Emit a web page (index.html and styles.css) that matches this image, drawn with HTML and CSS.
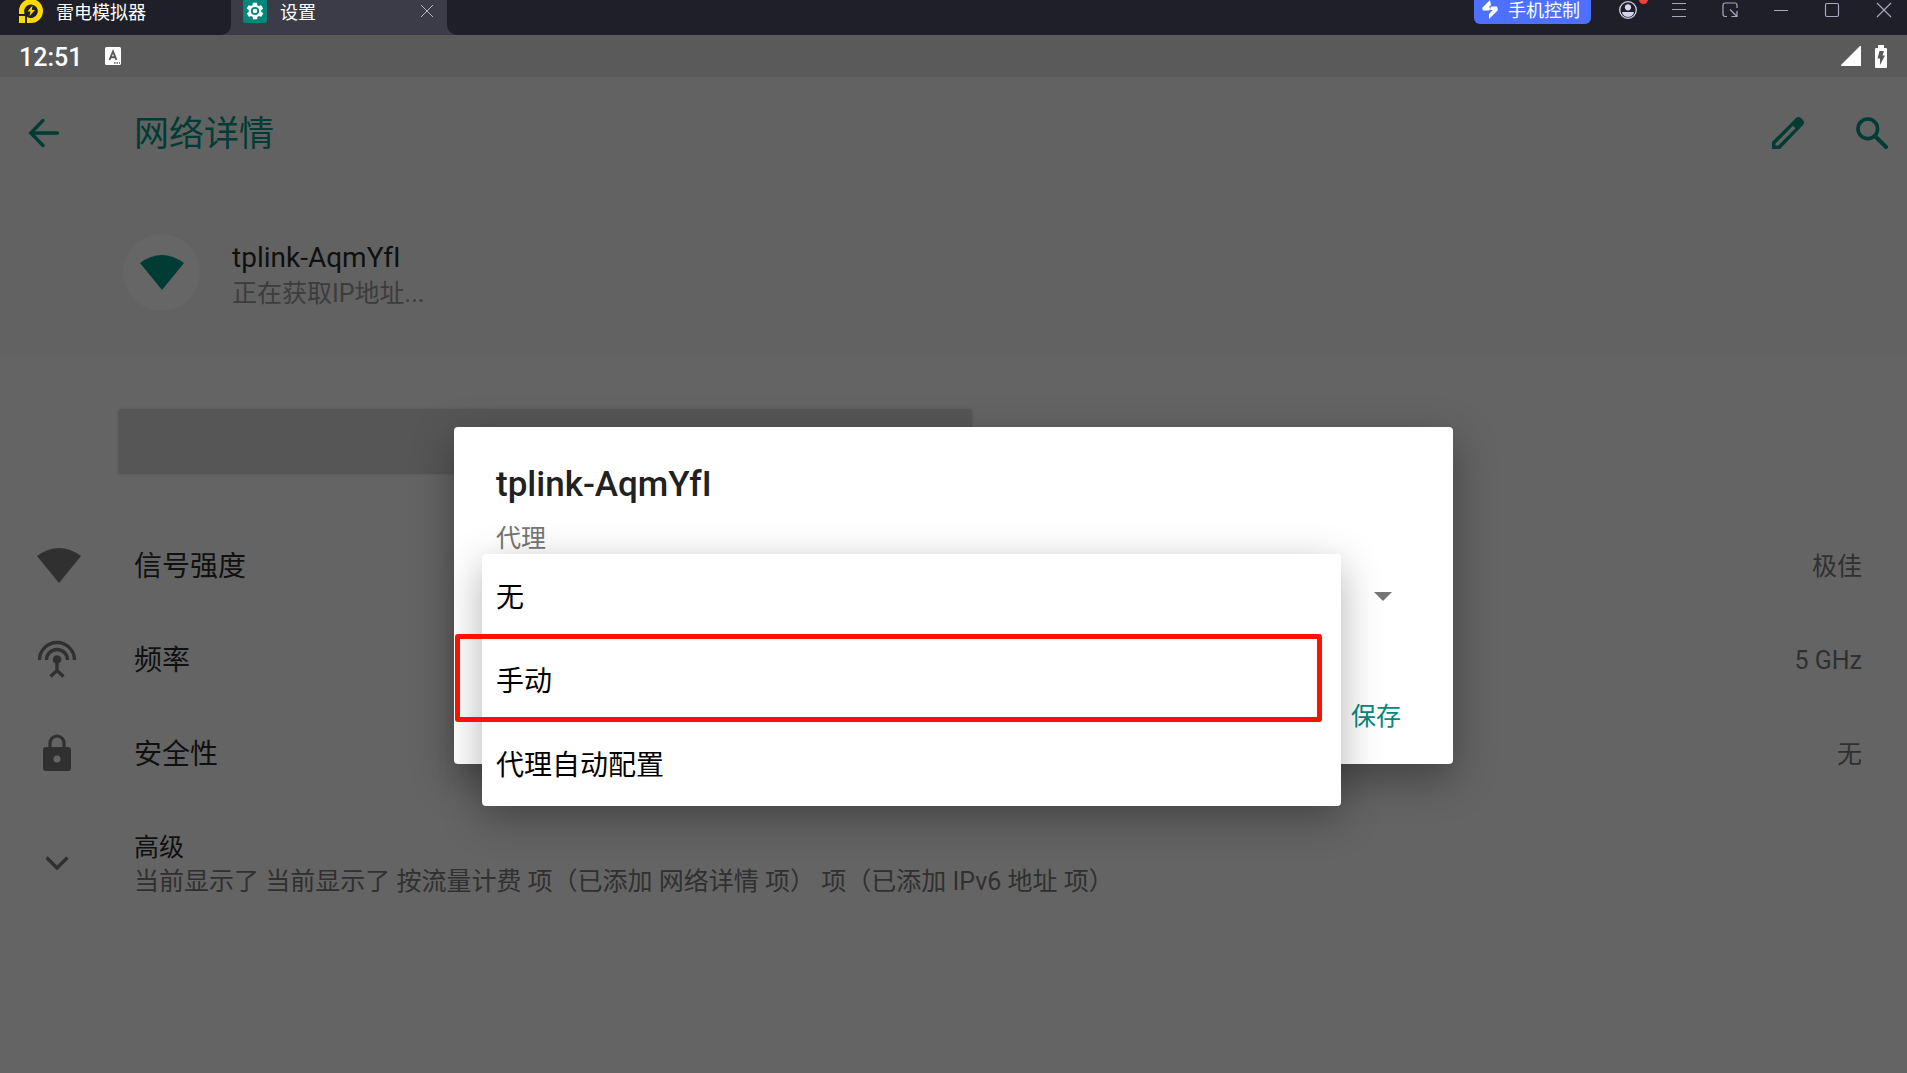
FILE: index.html
```html
<!DOCTYPE html>
<html lang="zh-CN">
<head>
  <meta charset="UTF-8">
  <meta name="viewport" content="width=device-width, initial-scale=1.0">
  <title>网络详情</title>
  <link rel="stylesheet" href="styles.css">
</head>
<body>
<header class="titlebar">
  <div class="tab home-tab">
    <svg width="24" height="24" viewBox="0 0 24 24">
      <path fill="#ffd900" d="M12 0a12 12 0 1 1 0 24H8v-6.300a6.800 6.800 0 1 0-2.700-4.200V15H0v-3A12 12 0 0 1 12 0zM0 17h6v7H0z"/>
      <path fill="#ffd900" d="M13.500 6.500L8.500 12.500h3L10.500 17l5.500-6h-3.200z"/>
    </svg>
    <span>雷电模拟器</span>
  </div>
  <div class="tab active-tab">
    <svg width="24" height="24" viewBox="0 0 24 24">
      <rect width="24" height="24" rx="3" fill="#00897b"/>
      <path fill="#fff" transform="translate(2 2) scale(.833)" d="M19.400 13c0-.3.100-.6.100-1s0-.7-.1-1l2.100-1.600c.2-.2.200-.4.100-.6l-2-3.500c-.1-.2-.4-.3-.6-.2l-2.500 1c-.5-.4-1.100-.7-1.700-1l-.4-2.600c0-.3-.2-.5-.5-.5h-4c-.2 0-.4.200-.5.400l-.4 2.700c-.6.200-1.100.6-1.700 1l-2.500-1c-.2-.1-.5 0-.6.200l-2 3.500c-.1.200-.1.500.1.600L4.600 11c0 .3-.1.700-.1 1s0 .7.100 1l-2.100 1.600c-.2.200-.2.400-.1.600l2 3.500c.1.200.4.300.6.200l2.500-1c.5.400 1.100.7 1.700 1l.4 2.600c0 .3.200.5.500.5h4c.3 0 .5-.2.500-.4l.4-2.700c.6-.2 1.100-.6 1.700-1l2.500 1c.2.100.5 0 .6-.2l2-3.500c.1-.2.100-.5-.1-.6z"/>
      <circle cx="12" cy="12" r="3.200" fill="#fff" stroke="#00897b" stroke-width="1.800"/>
    </svg>
    <span>设置</span>
    <button class="tab-close" aria-label="关闭标签">
      <svg width="14" height="14" viewBox="0 0 14 14"><path d="M1 1l12 12M13 1L1 13" stroke="#b4b3bf" fill="none"/></svg>
    </button>
  </div>
  <div class="window-area">
    <button class="phone-btn">
      <svg width="16" height="20" viewBox="0 0 16 20"><path fill="#fff" d="M8 0L0 8l1 2.500h6l2-3H6.500L9 5zM7 19l9-9-1-3.500H9.500l-1.500 3.500h2.500L7 14z"/></svg>
      手机控制
    </button>
    <button class="win-btn" aria-label="账号">
      <svg width="18" height="18" viewBox="0 0 18 18">
        <circle cx="9" cy="9" r="8.300" fill="none" stroke="#d5d2ea" stroke-width="1.300"/>
        <circle cx="9" cy="6.300" r="3.100" fill="#d5d2ea"/>
        <path fill="#d5d2ea" d="M3.200 11h11.600c.5 2-2.300 5-5.800 5s-6.300-3-5.800-5z"/>
      </svg>
      <span class="dot"></span>
    </button>
    <button class="win-btn" aria-label="菜单">
      <svg width="16" height="16" viewBox="0 0 16 16"><path d="M1 1.500h14M1 7.500h14M1 14.500h14" stroke="#a9a6be"/></svg>
    </button>
    <button class="win-btn" aria-label="小窗">
      <svg width="16" height="16" viewBox="0 0 16 16" fill="none" stroke="#a9a6be" stroke-width="1.200"><path d="M5 14.500H3a2 2 0 0 1-2-2V3a2 2 0 0 1 2-2h10a2 2 0 0 1 2 2v3M8 7.500l6.500 6.500M15 9v5.500H9.500"/></svg>
    </button>
    <button class="win-btn" aria-label="最小化">
      <svg width="16" height="16" viewBox="0 0 16 16"><path d="M1 8.500h14" stroke="#a9a6be"/></svg>
    </button>
    <button class="win-btn" aria-label="最大化">
      <svg width="16" height="16" viewBox="0 0 16 16"><rect x="1.500" y="1.500" width="13" height="13" rx="1.500" fill="none" stroke="#a9a6be" stroke-width="1.200"/></svg>
    </button>
    <button class="win-btn close-btn" aria-label="关闭">
      <svg width="16" height="16" viewBox="0 0 16 16"><path d="M1 1l14 14M15 1L1 15" stroke="#a9a6be" stroke-width="1.200"/></svg>
    </button>
  </div>
</header>

<div class="screen">
  <div class="statusbar">
    <span class="clock">12:51</span>
    <svg width="18" height="18" viewBox="0 0 18 18">
      <rect x="1" width="16" height="18" rx="1.500" fill="#fff"/>
      <path d="M5.500 13L9 4.500l3.500 8.500M6.800 10.300h4.400" fill="none" stroke="#5a5a5a" stroke-width="1.900"/>
      <path d="M10 16h1.500M12.500 16H14M15 16h1" stroke="#5a5a5a" stroke-width="1.500"/>
    </svg>
    <svg class="signal" width="20" height="20" viewBox="0 0 20 20"><path fill="#fff" d="M0 20V19L19 0h1v20z"/></svg>
    <svg width="12" height="23" viewBox="0 0 12 23">
      <path fill="#fff" d="M3 0h6v3h2a1 1 0 0 1 1 1v18a1 1 0 0 1-1 1H1a1 1 0 0 1-1-1V4a1 1 0 0 1 1-1h2z"/>
      <path fill="#5a5a5a" d="M4.500 6H9L7.500 10.500H10L5 20v-6.500H2.500z"/>
    </svg>
  </div>

  <div class="page-head">
    <div class="appbar">
      <button class="icon-btn" aria-label="返回">
        <svg width="32" height="32" viewBox="0 0 32 32"><path d="M29.500 16H3M15 3.500L2.800 16 15 28.500" fill="none" stroke="#003c34" stroke-width="3.400" stroke-linecap="round"/></svg>
      </button>
      <h1>网络详情</h1>
      <button class="icon-btn" aria-label="修改">
        <svg width="32" height="32" viewBox="0 0 32 32">
          <path fill="#003c34" fill-rule="evenodd" d="M0 25L24 1q2.500-2 5 0l2 2q2 2.500 0 5L8 32H0zM3.500 26.500v2h2.800L23.500 11.200l-2.500-2.500z"/>
        </svg>
      </button>
      <button class="icon-btn" aria-label="搜索">
        <svg width="32" height="32" viewBox="0 0 32 32" fill="none" stroke="#003c34"><circle cx="11.800" cy="11.800" r="9.800" stroke-width="3.600"/><path d="M19 19l11 11" stroke-width="4" stroke-linecap="round"/></svg>
      </button>
    </div>
    <div class="network">
      <div class="avatar">
        <svg width="44" height="35" viewBox="0 0 44 35"><path fill="#003c34" d="M0 8Q22-8 44 8L22 35z"/></svg>
      </div>
      <div class="network-text">
        <div class="network-name">tplink-AqmYfI</div>
        <div class="network-state">正在获取IP地址...</div>
      </div>
    </div>
  </div>

  <div class="actions">
    <button class="forget-btn" aria-label="取消保存" disabled></button>
  </div>

  <ul class="details">
    <li>
      <div class="icon"><svg class="wide" width="44" height="35" viewBox="0 0 44 35"><path fill="#303030" d="M0 8Q22-8 44 8L22 35z"/></svg></div>
      <span class="label">信号强度</span>
      <span class="value">极佳</span>
    </li>
    <li>
      <div class="icon">
        <svg width="40" height="38" viewBox="0 0 40 38" fill="none" stroke="#303030" stroke-width="3.400">
          <path d="M2.500 20a17.500 17.500 0 0 1 35 0M9.500 20a10.500 10.500 0 0 1 21 0M20 22v9.500M13.500 36.500l6.500-6 6.500 6"/>
          <circle cx="20" cy="19.500" r="4.300" fill="#303030" stroke="none"/>
        </svg>
      </div>
      <span class="label">频率</span>
      <span class="value">5 GHz</span>
    </li>
    <li>
      <div class="icon">
        <svg width="28" height="38" viewBox="0 0 28 38">
          <path d="M7 14V9a7 7 0 0 1 14 0v5" fill="none" stroke="#303030" stroke-width="3.200"/>
          <path fill="#303030" fill-rule="evenodd" d="M3 13h22a3 3 0 0 1 3 3v18a3 3 0 0 1-3 3H3a3 3 0 0 1-3-3V16a3 3 0 0 1 3-3zm11 8.500a3.500 3.500 0 1 0 0 7 3.500 3.500 0 0 0 0-7z"/>
        </svg>
      </div>
      <span class="label">安全性</span>
      <span class="value">无</span>
    </li>
    <li class="advanced">
      <div class="icon"><svg width="24" height="14" viewBox="0 0 24 14"><path d="M1.500 1.500L12 12 22.500 1.500" fill="none" stroke="#303030" stroke-width="3.400"/></svg></div>
      <div class="advanced-text">
        <div class="advanced-title">高级</div>
        <div class="advanced-summary">当前显示了 当前显示了 按流量计费 项（已添加 网络详情 项） 项（已添加 IPv6 地址 项）</div>
      </div>
    </li>
  </ul>

  <div class="overlay">
    <form class="dialog">
      <h2>tplink-AqmYfI</h2>
      <label for="proxy">代理</label>
      <div class="spinner">
        <select id="proxy">
          <option>无</option>
          <option>手动</option>
          <option>代理自动配置</option>
        </select>
        <svg width="18" height="9" viewBox="0 0 18 9"><path fill="#757575" d="M0 0h18L9 9z"/></svg>
      </div>
      <div class="dialog-actions">
        <button type="button" class="save-btn">保存</button>
      </div>
      <div class="dropdown">
        <button type="button">无</button>
        <button type="button">手动</button>
        <button type="button">代理自动配置</button>
      </div>
      <div class="highlight"></div>
    </form>
  </div>
</div>
</body>
</html>
```

FILE: styles.css
```css
* {
  box-sizing: border-box;
}

body {
  margin: 0;
  min-height: 100vh;
  display: flex;
  flex-direction: column;
  font-family: Roboto, "Noto Sans CJK SC", sans-serif;
  background-color: #646464;
  color: #101010;
}

button {
  padding: 0;
  border: none;
  background: none;
  color: inherit;
  font: inherit;
  cursor: pointer;
}

svg {
  display: block;
  flex: none;
}

h1, h2, ul {
  margin: 0;
  padding: 0;
  font-weight: 400;
}

/* emulator window bar */
.titlebar {
  display: flex;
  height: 35px;
  background-color: #3c3b48;
  color: #fff;
  font-family: "Noto Sans CJK SC", sans-serif;
  font-size: 18px;
  line-height: 22px;
}

.tab {
  display: flex;
  align-items: center;
  gap: 13px;
  padding-bottom: 13px;
}

.home-tab {
  width: 231px;
  padding-left: 19px;
  background-color: #1f1f2a;
  border-radius: 0 0 10px 0;
}

.active-tab {
  width: 216px;
  padding-left: 12px;
  padding-right: 13px;
}

.tab-close {
  margin-left: auto;
}

.window-area {
  flex: 1;
  display: flex;
  justify-content: flex-end;
  align-items: flex-start;
  background-color: #1f1f2a;
  border-radius: 0 0 0 10px;
}

.phone-btn {
  display: flex;
  gap: 10px;
  height: 24px;
  margin-right: 11px;
  padding: 0 11px 4px 8px;
  border-radius: 0 0 6px 6px;
  background-color: #4d70ff;
  line-height: 18px;
}

.win-btn {
  position: relative;
  display: flex;
  align-items: center;
  justify-content: center;
  width: 51px;
  height: 19px;
}

.close-btn {
  width: 50px;
  padding-left: 4px;
}

.dot {
  position: absolute;
  top: -5px;
  right: 5px;
  width: 9px;
  height: 9px;
  border-radius: 50%;
  background-color: #ff3b3b;
}

/* android screen */
.screen {
  position: relative;
  flex: 1;
}

.statusbar {
  display: flex;
  align-items: center;
  gap: 14px;
  height: 42px;
  padding: 0 20px 0 19px;
  background-color: #5a5a5a;
  color: #fff;
}

.clock {
  margin-right: 8px;
  padding-top: 2px;
  font-size: 25px;
  font-weight: 500;
}

.signal {
  margin-left: auto;
}

.page-head {
  background-color: #626262;
}

.appbar {
  display: flex;
  align-items: center;
  gap: 52px;
  height: 112px;
  padding: 0 19px 0 28px;
}

.appbar h1 {
  flex: 1;
  margin-left: 22px;
  padding-top: 4px;
  color: #003c34;
  font-size: 35px;
  line-height: 48px;
}

.network {
  display: flex;
  align-items: center;
  gap: 32px;
  height: 167px;
  padding-left: 123px;
}

.network-text {
  padding-top: 6px;
}

.avatar {
  display: flex;
  align-items: center;
  justify-content: center;
  width: 77px;
  height: 77px;
  border-radius: 50%;
  background-color: #666;
}

.network-name {
  font-size: 28px;
  line-height: 36px;
}

.network-state {
  color: #3c3c3c;
  font-size: 25px;
  line-height: 36px;
}

.actions {
  display: flex;
  padding: 53px 81px 44px 118px;
}

.forget-btn {
  width: 50%;
  height: 65px;
  border-radius: 4px;
  background-color: #565656;
  box-shadow: 0 0 3px #565656;
}

.details {
  list-style: none;
}

.details li {
  display: flex;
  align-items: center;
  height: 94px;
  padding-right: 45px;
}

.icon {
  display: flex;
  justify-content: center;
  width: 134px;
  padding-right: 20px;
}

.icon .wide {
  margin-left: 4px;
}

.label {
  flex: 1;
  padding-top: 4px;
  font-size: 28px;
  line-height: 36px;
}

.value {
  padding-top: 4px;
  color: #303030;
  font-size: 25px;
  line-height: 36px;
}

.details .advanced {
  height: 126px;
}

.advanced-text {
  padding-top: 4px;
  font-size: 25px;
  line-height: 34px;
}

.advanced-summary {
  color: #303030;
}

/* proxy dialog */
.overlay {
  position: absolute;
  inset: 0;
  display: flex;
  align-items: center;
  justify-content: center;
  padding-top: 83px;
}

.dialog {
  position: relative;
  width: 999px;
  padding: 28px 42px 6px;
  border-radius: 4px;
  background-color: #fff;
  box-shadow: 0 14px 42px rgba(0, 0, 0, 0.35);
}

.dialog h2 {
  color: #212121;
  font-size: 35px;
  font-weight: 500;
  line-height: 60px;
}

.dialog label {
  display: block;
  color: #757575;
  font-size: 25px;
  line-height: 48px;
}

.spinner {
  display: flex;
  align-items: center;
  height: 66px;
  padding-right: 19px;
}

.spinner select {
  flex: 1;
  border: none;
  background: none;
  appearance: none;
  font: inherit;
  font-size: 28px;
}

.dialog-actions {
  display: flex;
  justify-content: flex-end;
  margin-top: 45px;
  padding-right: 10px;
}

.save-btn {
  height: 84px;
  padding-top: 2px;
  color: #00897b;
  font-size: 25px;
  line-height: 36px;
}

.dropdown {
  position: absolute;
  top: 127px;
  left: 28px;
  right: 112px;
  border-radius: 4px;
  background-color: #fff;
  box-shadow: 0 12px 42px rgba(0, 0, 0, 0.3);
}

.dropdown button {
  display: block;
  width: 100%;
  height: 84px;
  padding: 4px 14px 0;
  color: #000;
  font-size: 28px;
  line-height: 36px;
  text-align: left;
}

.highlight {
  position: absolute;
  top: 207px;
  left: 1px;
  right: 131px;
  height: 88px;
  border: 5px solid #ff1000;
  border-radius: 3px;
  pointer-events: none;
}
```
